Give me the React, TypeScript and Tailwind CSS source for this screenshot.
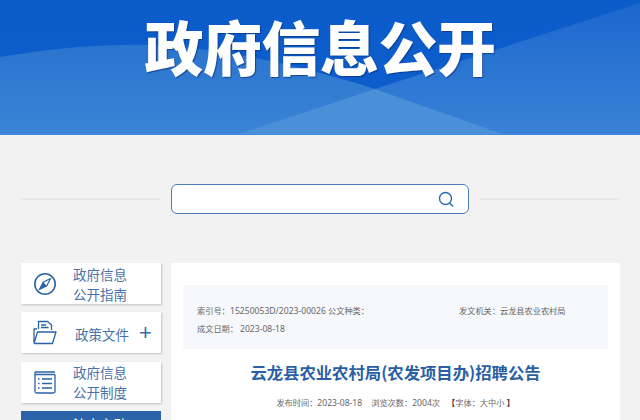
import React from "react";

const cjk = "font-['Noto_Sans_CJK_SC','Liberation_Sans',sans-serif]";
const num = "font-['Noto_Sans','Liberation_Sans',sans-serif]";

function HeaderArt() {
  return (
    <svg className="absolute inset-0 h-[134px] w-[640px]" viewBox="0 0 640 134" preserveAspectRatio="none">
      <defs>
        <linearGradient id="g1" x1="0" y1="0" x2="0" y2="1">
          <stop offset="0" stopColor="#0b5bcb" />
          <stop offset="1" stopColor="#0e5fcc" />
        </linearGradient>
        <linearGradient id="g2" x1="0" y1="0" x2="0" y2="1">
          <stop offset="0" stopColor="#2a74cf" />
          <stop offset="1" stopColor="#3b84d6" />
        </linearGradient>
        <linearGradient id="g3" x1="0" y1="0" x2="0" y2="1">
          <stop offset="0" stopColor="#1c67cd" />
          <stop offset="1" stopColor="#3a82d6" />
        </linearGradient>
      </defs>
      <rect width="640" height="134" fill="url(#g1)" />
      <path d="M640 3 L375 89 L236 135 L640 135 Z" fill="url(#g3)" />
      <path d="M0 57 C60 47 110 44 150 45 C210 47 290 62 375 89 L505 135 L0 135 Z" fill="url(#g2)" />
      <path d="M375 89 L236 135 L505 135 Z" fill="#4c8fd9" />
    </svg>
  );
}

function Compass() {
  return (
    <svg width="24" height="24" viewBox="0 0 24 24" fill="none" stroke="#2a63a8" strokeWidth="1.6">
      <circle cx="12" cy="12" r="10.2" />
      <path d="M17.5 6.5 L13.8 13.8 L6.5 17.5 L10.2 10.2 Z" strokeWidth="1.2" />
      <path d="M13.8 13.8 L6.5 17.5 L10.2 10.2 Z" fill="#2a63a8" stroke="none" />
    </svg>
  );
}

function FolderDoc() {
  return (
    <svg width="24" height="25" viewBox="0 0 24 25" fill="none" stroke="#2a63a8" strokeWidth="1.3" strokeLinejoin="round">
      <path d="M5.5 9 V1.5 H14.5 L18.5 5 V10" />
      <path d="M8 5 H13 M8 7.5 H15.5" />
      <path d="M1 23.5 V9 H4 M1 23.5 H19.5 L23 12 H4.5 L1 23.5" />
    </svg>
  );
}

function BookList() {
  return (
    <svg width="22" height="24" viewBox="0 0 22 24" fill="none" stroke="#2a63a8" strokeWidth="1.3">
      <path d="M1 2 H21 M1 4.5 H21" />
      <path d="M1 2 V21.5 Q1 23 2.5 23 H19.5 Q21 23 21 21.5 V4.5" />
      <path d="M4 9 H5.5 M8 9 H18 M4 13.5 H5.5 M8 13.5 H18 M4 18 H5.5 M8 18 H18" />
    </svg>
  );
}

function SideItem({ icon, lines, plus }: { icon: React.ReactNode; lines: string[]; plus?: boolean }) {
  return (
    <div className="flex h-[41px] w-[140px] items-center bg-white shadow-[1px_1px_2px_rgba(0,0,0,0.2)]">
      <div className="mr-[4px] flex w-[48px] shrink-0 justify-center">{icon}</div>
      <div className={`text-[13.5px] leading-[20px] text-[#4a72a6] ${plus ? "pl-[2px] pt-[2px]" : ""}`}>
        {lines.map((l) => (
          <div key={l}>{l}</div>
        ))}
      </div>
      {plus && <div className="ml-[10px] text-[22px] font-light leading-none text-[#3b6ba8] font-['Liberation_Sans']">+</div>}
    </div>
  );
}

export default function App() {
  return (
    <div className={`h-[420px] w-[640px] overflow-hidden bg-[#f2f2f2] ${cjk}`}>
      <header className="relative flex h-[135px] justify-center border-b border-[#3d8be0] pt-[3px]">
        <HeaderArt />
        <h1 className="relative text-[59px] font-black leading-[85px] tracking-[-0.5px] text-white [text-shadow:1px_1px_1px_rgba(10,50,120,0.7)]">
          政府信息公开
        </h1>
      </header>

      <div className="flex h-[128px] items-center justify-between px-[21px]">
        <div className="h-[2px] w-[139px] bg-[#e6e6e6]" />
        <div className="flex h-[30px] w-[298px] items-center justify-end rounded-[6px] border-[1.5px] border-[#4a7fb8] bg-white pr-[13px]">
          <svg width="17" height="17" viewBox="0 0 17 17" fill="none" stroke="#2f68ad" strokeWidth="1.4">
            <circle cx="7.5" cy="7.5" r="6" />
            <path d="M11.5 12 L15 15.5" />
          </svg>
        </div>
        <div className="h-[2px] w-[139px] bg-[#e6e6e6]" />
      </div>

      <div className="flex gap-[10px] pl-[21px]">
        <aside className="flex w-[140px] flex-col gap-[8.3px]">
          <SideItem icon={<Compass />} lines={["政府信息", "公开指南"]} />
          <SideItem icon={<FolderDoc />} lines={["政策文件"]} plus />
          <SideItem icon={<BookList />} lines={["政府信息", "公开制度"]} />
          <div className="h-[41px] bg-[#2a63a8] pl-[52px] pt-[3px] text-[13.5px] leading-[20px] text-white">
            法定主动
          </div>
        </aside>

        <main className="h-[160px] w-[449px] bg-white px-[12px] pt-[22px]">
          <div className="h-[64px] w-[425px] whitespace-nowrap bg-[#f6f8fb] pl-[14px] pt-[17px] text-[8.2px] leading-[17px] text-[#666]">
            <div className="flex items-baseline">
              <span className="w-[33px]">索引号：</span>
              <span className={`w-[98px] text-[8.6px] ${num}`}>15250053D/2023-00026</span>
              <span className="w-[131px]">公文种类：</span>
              <span>发文机关：云龙县农业农村局</span>
            </div>
            <div className="flex items-baseline">
              <span className="w-[43px]">成文日期：</span>
              <span className={`text-[8.6px] ${num}`}>2023-08-18</span>
            </div>
          </div>
          <h2 className="mt-[11px] whitespace-nowrap text-center text-[16.35px] font-bold leading-[24px] text-[#2a5fa5]">
            云龙县农业农村局(农发项目办)招聘公告
          </h2>
          <div className="mt-[11px] flex items-baseline justify-center whitespace-nowrap text-[8.2px] leading-[14px] text-[#666]">
            <span>发布时间：</span>
            <span className={`text-[8.6px] ${num}`}>2023-08-18</span>
            <span className="ml-[9px]">浏览次数：</span>
            <span className={`text-[8.6px] ${num}`}>2004</span>
            <span>次</span>
            <span className="ml-[7px] font-bold text-[#333]">【</span>
            <span>字体：大中小</span>
            <span className="ml-[2px] font-bold text-[#333]">】</span>
          </div>
        </main>
      </div>
    </div>
  );
}
